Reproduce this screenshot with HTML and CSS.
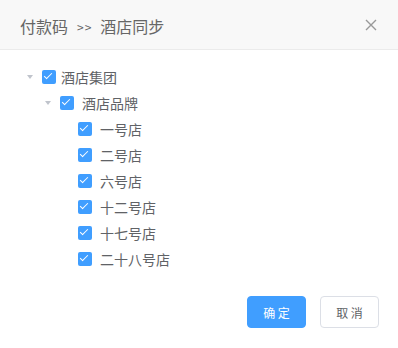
FILE: index.html
```html
<!DOCTYPE html>
<html lang="zh-CN">
<head>
  <meta charset="UTF-8" />
  <title>酒店同步</title>
  <link rel="stylesheet" href="styles.css">
</head>
<body>
  <div class="dialog">
    <!-- HEADER -->
    <div class="dialog-header">
      <span class="dialog-title">付款码<span class="title-sep">&gt;&gt;</span>酒店同步</span>
      <span class="dialog-close">
        <svg width="12" height="12" viewBox="0 0 12 12">
          <path d="M1 1 L11 11 M11 1 L1 11" stroke="#999" stroke-width="1.4" fill="none" />
        </svg>
      </span>
    </div>

    <!-- TREE -->
    <div class="dialog-body">
      <div class="tree">
        <div class="tree-node level-0">
          <span class="tree-arrow"></span>
          <span class="tree-check"></span>
          <span class="tree-label root">酒店集团</span>
        </div>
        <div class="tree-node level-1">
          <span class="tree-arrow"></span>
          <span class="tree-check"></span>
          <span class="tree-label">酒店品牌</span>
        </div>
        <div class="tree-node level-2">
          <span class="tree-arrow empty"></span>
          <span class="tree-check"></span>
          <span class="tree-label">一号店</span>
        </div>
        <div class="tree-node level-2">
          <span class="tree-arrow empty"></span>
          <span class="tree-check"></span>
          <span class="tree-label">二号店</span>
        </div>
        <div class="tree-node level-2">
          <span class="tree-arrow empty"></span>
          <span class="tree-check"></span>
          <span class="tree-label">六号店</span>
        </div>
        <div class="tree-node level-2">
          <span class="tree-arrow empty"></span>
          <span class="tree-check"></span>
          <span class="tree-label">十二号店</span>
        </div>
        <div class="tree-node level-2">
          <span class="tree-arrow empty"></span>
          <span class="tree-check"></span>
          <span class="tree-label">十七号店</span>
        </div>
        <div class="tree-node level-2">
          <span class="tree-arrow empty"></span>
          <span class="tree-check"></span>
          <span class="tree-label">二十八号店</span>
        </div>
      </div>
    </div>

    <!-- FOOTER -->
    <div class="dialog-footer">
      <button class="btn btn-primary">确 定</button>
      <button class="btn">取 消</button>
    </div>
  </div>
</body>
</html>
```

FILE: styles.css
```css
body {
  margin: 0;
  font-family: "Noto Sans CJK SC", "Noto Sans", sans-serif;
  background-color: #fff;
  color: #606266;
}
.dialog {
  width: 398px;
  height: 348px;
  display: flex;
  flex-direction: column;
  background-color: #fff;
}
.dialog-header {
  height: 49px;
  padding: 0 20px;
  display: flex;
  align-items: center;
  justify-content: space-between;
  background-color: #f8f8f8;
  border-bottom: 1px solid #ebebeb;
}
.dialog-title {
  font-size: 16px;
  color: #666;
  line-height: 20px;
  padding-top: 3px;
}
.dialog-title .title-sep {
  font-size: 12px;
  letter-spacing: 1px;
  margin: 0 8px 0 9px;
  vertical-align: 1px;
}
.dialog-close {
  display: flex;
  margin-right: 1px;
}

.dialog-body {
  padding: 14px 0 0 0;
}
.tree {
  padding-left: 18px;
}
.tree-node {
  height: 26px;
  display: flex;
  align-items: center;
}
.tree-node.level-1 {
  padding-left: 18px;
}
.tree-node.level-2 {
  padding-left: 36px;
}
.tree-arrow {
  width: 24px;
  height: 26px;
  display: flex;
  align-items: center;
  justify-content: center;
}
.tree-arrow::before {
  content: "";
  border-left: 3.5px solid transparent;
  border-right: 3.5px solid transparent;
  border-top: 4px solid #c0c4cc;
}
.tree-arrow.empty::before {
  display: none;
}
.tree-check {
  position: relative;
  width: 14px;
  height: 14px;
  border-radius: 2px;
  background-color: #409eff;
}
.tree-check::after {
  content: "";
  position: absolute;
  left: 4px;
  top: 1px;
  width: 3px;
  height: 7px;
  border: 1px solid #fff;
  border-left: 0;
  border-top: 0;
  transform: rotate(45deg);
}
.tree-label {
  margin-left: 8px;
  font-size: 14px;
  color: #606266;
}
.tree-label.root {
  margin-left: 5px;
}

.dialog-footer {
  display: flex;
  justify-content: flex-end;
  gap: 14px;
  padding: 24px 19px 0 0;
}
.btn {
  width: 59px;
  height: 32px;
  padding: 0;
  font-family: inherit;
  font-size: 12px;
  color: #606266;
  background-color: #fff;
  border: 1px solid #dcdfe6;
  border-radius: 4px;
}
.btn-primary {
  background-color: #409eff;
  border-color: #409eff;
  color: #fff;
}
```
